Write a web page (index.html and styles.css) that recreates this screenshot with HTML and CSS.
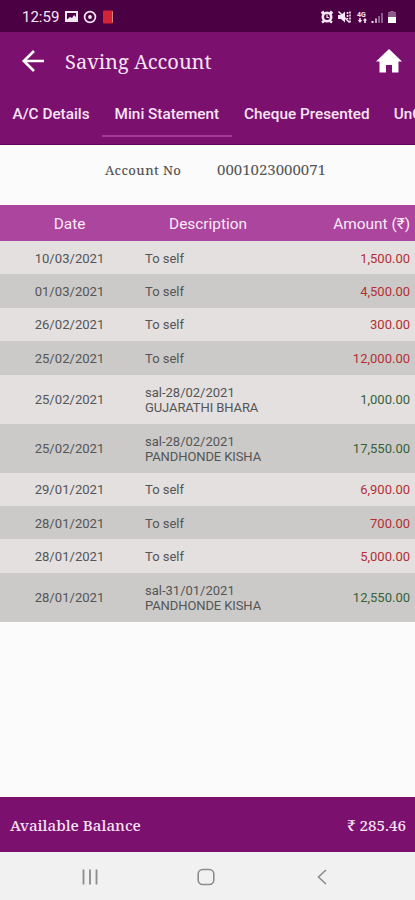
FILE: index.html
```html
<!DOCTYPE html>
<html lang="en">
<head>
  <meta charset="UTF-8">
  <meta name="viewport" content="width=device-width, initial-scale=1">
  <title>Saving Account</title>
  <link rel="stylesheet" href="styles.css">
</head>
<body>

  <div class="status-bar">
    <span class="clock">12:59</span>
    <svg class="notifications" width="50" height="16" viewBox="0 0 50 16">
      <path fill="#f5e6f5" fill-rule="evenodd" d="M0 2h13v11H0zM2 4v6.500l3-2.500 2 1 2-3 2 2V4z"/>
      <circle cx="25" cy="8" r="5.400" fill="none" stroke="#f5e6f5" stroke-width="1.700"/>
      <circle cx="25" cy="8" r="1.900" fill="#f5e6f5"/>
      <rect x="38" y="1.500" width="10" height="13" rx="1" fill="#d42332"/>
      <path d="M47.500 2.500v11" stroke="#c98a8a"/>
    </svg>
    <svg class="system" width="80" height="16" viewBox="0 0 80 16">
      <g fill="none" stroke="#f5e6f5">
        <circle cx="8" cy="8" r="4.200" stroke-width="2.600"/>
        <path stroke-width="2.400" d="M2.500 4.500l2.500-2M13.500 4.500l-2.500-2M3 13.500l2-1.500M13 13.500l-2-1.500"/>
        <path stroke-width="1.200" d="M8 5.500V8.500h2"/>
        <path stroke-width="1.600" d="M19.500 2.500l11 11"/>
        <path stroke-width="1.600" stroke-dasharray="2 1" d="M28.500 3v7M31 2.500v11"/>
      </g>
      <path fill="#f5e6f5" d="M19 6h3l4-3.500v11L22 10h-3z"/>
      <text class="network" x="38" y="7.500">4G</text>
      <path fill="#f5e6f5" d="M41 14l-2.200-3h1.400V9h1.600v2h1.400zM46 9l2.200 2.500h-1.400V14h-1.600v-2.500h-1.400z"/>
      <path fill="#f5e6f5" d="M52.500 12h2v2h-2z"/>
      <path fill="#c3a2c3" d="M56 9.500h2V14h-2z"/>
      <path fill="#8b5c8b" d="M59 7h2v7h-2zM62 4h2v10h-2z"/>
      <path fill="#8b5c8b" d="M71 2h4v1h2v5h-8V3h2z"/>
      <path fill="#fff" d="M69 8h8v6h-8z"/>
    </svg>
  </div>

  <div class="app-bar">
    <svg width="24" height="24" viewBox="0 0 24 24" fill="none" stroke="#fff" stroke-width="2.600">
      <path d="M23 12H3M13 2L2.800 12 13 22"/>
    </svg>
    <h1>Saving Account</h1>
    <svg class="home" width="28" height="26" viewBox="0 0 28 26">
      <path fill="#fff" d="M14 1L1 13.500h3.500V24.500h6.500V17h6v7.500h6.500V13.500H27z"/>
    </svg>
  </div>

  <div class="tabs">
    <span class="tab">A/C Details</span>
    <span class="tab active">Mini Statement</span>
    <span class="tab">Cheque Presented</span>
    <span class="tab">UnCleared</span>
  </div>

  <div class="account">
    <span class="account-label">Account No</span>
    <span class="account-no">0001023000071</span>
  </div>

  <table class="statement">
    <thead>
      <tr><th class="date">Date</th><th class="desc">Description</th><th class="amount">Amount (₹)</th></tr>
    </thead>
    <tbody>
      <tr><td class="date">10/03/2021</td><td>To self</td><td class="amount debit">1,500.00</td></tr>
      <tr><td class="date">01/03/2021</td><td>To self</td><td class="amount debit">4,500.00</td></tr>
      <tr><td class="date">26/02/2021</td><td>To self</td><td class="amount debit">300.00</td></tr>
      <tr><td class="date">25/02/2021</td><td>To self</td><td class="amount debit">12,000.00</td></tr>
      <tr class="tall"><td class="date">25/02/2021</td><td>sal-28/02/2021<br><span class="name">GUJARATHI BHARA</span></td><td class="amount credit">1,000.00</td></tr>
      <tr class="tall"><td class="date">25/02/2021</td><td>sal-28/02/2021<br><span class="name">PANDHONDE KISHA</span></td><td class="amount credit">17,550.00</td></tr>
      <tr><td class="date">29/01/2021</td><td>To self</td><td class="amount debit">6,900.00</td></tr>
      <tr><td class="date">28/01/2021</td><td>To self</td><td class="amount debit">700.00</td></tr>
      <tr><td class="date">28/01/2021</td><td>To self</td><td class="amount debit">5,000.00</td></tr>
      <tr class="tall"><td class="date">28/01/2021</td><td>sal-31/01/2021<br><span class="name">PANDHONDE KISHA</span></td><td class="amount credit">12,550.00</td></tr>
    </tbody>
  </table>

  <div class="balance">
    <span class="balance-label">Available Balance</span>
    <span class="balance-value">₹ 285.46</span>
  </div>

  <div class="nav-bar">
    <svg width="18" height="18" viewBox="0 0 18 18" fill="none" stroke="#8c8c8c" stroke-width="1.800">
      <path d="M2.500 1.500v15M9 1.500v15M15.500 1.500v15"/>
    </svg>
    <svg width="18" height="18" viewBox="0 0 18 18" fill="none" stroke="#8c8c8c" stroke-width="1.600">
      <rect x="1.200" y="1.500" width="15.600" height="15" rx="4.500"/>
    </svg>
    <svg width="18" height="18" viewBox="0 0 18 18" fill="none" stroke="#8c8c8c" stroke-width="1.600">
      <path d="M13 2L5.500 9l7.500 7"/>
    </svg>
  </div>

</body>
</html>
```
FILE: styles.css
```css
* {
  box-sizing: border-box;
}

body {
  margin: 0;
  height: 900px;
  display: flex;
  flex-direction: column;
  overflow: hidden;
  background: #fbfbfb;
  color: #555;
  font-family: Roboto, sans-serif;
}

svg {
  display: block;
  flex: none;
}

.status-bar {
  height: 32px;
  flex: none;
  display: flex;
  align-items: center;
  padding: 2px 16px 0 22px;
  background: #4c0044;
  color: #f5e6f5;
}

.clock {
  width: 43px;
  font-size: 15px;
}

.system {
  margin-left: auto;
}

.network {
  font-size: 7px;
  font-weight: 700;
  fill: #f5e6f5;
}

.app-bar {
  height: 58px;
  flex: none;
  display: flex;
  align-items: center;
  padding: 0 12px 0 21px;
  background: #7b106f;
}

h1 {
  margin: 0 0 0 20px;
  color: #f8e4f5;
  font: 400 20px "Noto Serif", "DejaVu Serif", serif;
}

.home {
  margin-left: auto;
}

.tabs {
  height: 55px;
  flex: none;
  display: flex;
  overflow: hidden;
  background: #7b106f;
  border-bottom: 1px solid #65005b;
}

.tab {
  flex: none;
  height: 47px;
  padding: 15px 12.500px 0;
  color: #f8e4f5;
  font-size: 15.300px;
  font-weight: 500;
  line-height: 18px;
  white-space: nowrap;
}

.tab:last-child {
  padding-left: 11.500px;
}

.tab.active {
  border-bottom: 2px solid #a43a9b;
}

.account {
  height: 60px;
  flex: none;
  display: flex;
  align-items: baseline;
  padding: 14px 0 0 105px;
  font-family: "Noto Serif", "DejaVu Serif", serif;
}

.account-label {
  width: 112px;
  font-size: 13px;
  font-weight: 500;
  letter-spacing: 0.400px;
}

.account-no {
  font-size: 15px;
}

.statement {
  width: 100%;
  table-layout: fixed;
  border-collapse: collapse;
  font-size: 13px;
  line-height: 15px;
}

.statement th {
  height: 36px;
  padding: 2px 0 0;
  background: #ab459d;
  color: #fbeaf8;
  font-size: 15.400px;
  font-weight: 400;
}

.statement td {
  height: 33.400px;
  padding: 1px 0 0 7px;
  background: #e3e0df;
}

.statement tr:nth-child(even) td {
  background: #cbcac8;
}

.statement .tall td {
  height: 49px;
}

.statement .name {
  letter-spacing: -0.100px;
}

.statement .date {
  width: 139px;
  padding-left: 0;
  text-align: center;
}

.statement td.date {
  font-size: 13.100px;
}

.statement .desc {
  width: 138px;
}

.statement td:nth-child(2) {
  padding-left: 6px;
}

.statement .amount {
  padding-right: 5px;
  text-align: right;
}

.statement .debit {
  color: #b32f35;
}

.statement .credit {
  color: #356238;
}

.balance {
  height: 55px;
  flex: none;
  display: flex;
  align-items: center;
  justify-content: space-between;
  margin-top: auto;
  padding: 0 9px 0 10px;
  background: #7b106f;
  color: #f8e4f5;
  font: 500 15.200px "Noto Serif", "DejaVu Serif", serif;
}

.nav-bar {
  height: 48px;
  flex: none;
  display: flex;
  align-items: center;
  justify-content: space-between;
  padding: 2px 84px 0 81px;
  background: #f1f1f1;
}
```
